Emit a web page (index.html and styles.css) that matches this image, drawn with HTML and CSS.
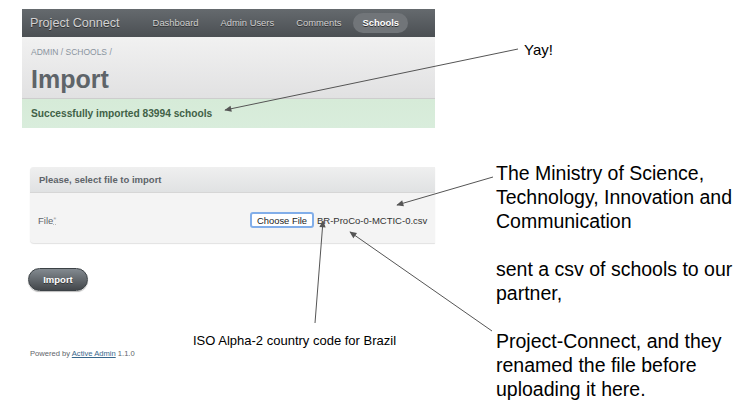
FILE: index.html
```html
<!DOCTYPE html>
<html>
<head>
<meta charset="utf-8">
<link rel="stylesheet" href="styles.css">
</head>
<body>
<div class="canvas">
  <div class="app">
    <div class="header">
      <span class="brand">Project Connect</span>
      <nav class="nav">
        <span class="nav-item">Dashboard</span>
        <span class="nav-item">Admin Users</span>
        <span class="nav-item">Comments</span>
        <span class="nav-item current">Schools</span>
      </nav>
    </div>
    <div class="title-bar">
      <div class="breadcrumb">ADMIN / SCHOOLS /</div>
      <h1 class="page-title">Import</h1>
    </div>
    <div class="flash">Successfully imported 83994 schools</div>
    <div class="panel">
      <div class="panel-head">Please, select file to import</div>
      <div class="panel-body">
        <label class="field-label">File<span class="req">*</span></label>
        <span class="file-btn">Choose File</span>
        <span class="file-name">BR-ProCo-0-MCTIC-0.csv</span>
      </div>
    </div>
    <div class="actions"><span class="btn">Import</span></div>
    <div class="footer">Powered by <a class="footer-link">Active Admin</a> 1.1.0</div>
  </div>
  <div class="notes">
    <div class="yay">Yay!</div>
    <div class="story">The Ministry of Science,<br>Technology, Innovation and<br>Communication<br><br>sent a csv of schools to our<br>partner,<br><br>Project-Connect, and they<br>renamed the file before<br>uploading it here.</div>
  </div>
  <div class="iso-note">ISO Alpha-2 country code for Brazil</div>
  <svg class="arrows" width="755" height="419" viewBox="0 0 755 419">
    <defs>
      <marker id="ah" viewBox="0 0 10 10" refX="9" refY="5" markerWidth="8" markerHeight="7" markerUnits="userSpaceOnUse" orient="auto">
        <path d="M0,0.5 L10,5 L0,9.5 z" fill="#555"/>
      </marker>
    </defs>
    <line x1="518" y1="49" x2="225" y2="110" stroke="#555" stroke-width="1" marker-end="url(#ah)"/>
    <line x1="493" y1="177" x2="397" y2="205" stroke="#555" stroke-width="1" marker-end="url(#ah)"/>
    <line x1="315" y1="323" x2="323" y2="221" stroke="#555" stroke-width="1" marker-end="url(#ah)"/>
    <line x1="492" y1="331" x2="350" y2="232" stroke="#555" stroke-width="1" marker-end="url(#ah)"/>
  </svg>
</div>
</body>
</html>
```
FILE: styles.css
```css
html, body {
  margin: 0;
  padding: 0;
  background: #fff;
}
body {
  font-family: "Liberation Sans", Arial, sans-serif;
  overflow: hidden;
}
.canvas {
  position: relative;
  width: 755px;
  height: 419px;
  display: flex;
  align-items: flex-start;
}
.app {
  margin-left: 22px;
  margin-top: 9px;
  width: 413px;
  display: flex;
  flex-direction: column;
}
.header {
  height: 28px;
  background: linear-gradient(#656a6e, #4b4f53);
  display: flex;
  align-items: center;
  padding-left: 8px;
}
.brand {
  font-size: 12.6px;
  color: #d2d2d2;
  text-shadow: 0 1px 0 #333;
  margin-right: 23px;
}
.nav {
  display: flex;
  align-items: center;
  gap: 2px;
}
.nav-item {
  font-size: 9.4px;
  color: #d0d0d0;
  text-shadow: 0 1px 0 #2e2e2e;
  padding: 0 10px;
  height: 20px;
  line-height: 20px;
  border-radius: 10px;
}
.nav-item.current {
  background: #717579;
  color: #fff;
  font-weight: bold;
  padding: 0 9px;
}
.title-bar {
  background: linear-gradient(#f1f1f1, #e1e1e2);
  border-bottom: 1px solid #cdcdcd;
  padding: 10px 0 5px 9px;
}
.breadcrumb {
  font-size: 8.5px;
  line-height: 10px;
  color: #8a949e;
}
.page-title {
  margin: 8px 0 0 0;
  font-size: 25px;
  line-height: 28px;
  font-weight: bold;
  color: #5e6469;
}
.flash {
  height: 29px;
  background: linear-gradient(#d6ebd8, #d9eddc);
  color: #416147;
  font-size: 10.2px;
  font-weight: bold;
  display: flex;
  align-items: center;
  padding-left: 9px;
}
.panel {
  margin: 39px 0 0 8px;
  background: #f4f4f4;
  border-radius: 4px 0 0 4px;
  box-shadow: 0 1px 1px #e2e2e2;
}
.panel-head {
  height: 25px;
  background: linear-gradient(#efefef, #e0e2e3);
  border-bottom: 1px solid #d6d6d6;
  border-radius: 4px 0 0 0;
  display: flex;
  align-items: center;
  padding-left: 9px;
  font-size: 9.5px;
  font-weight: bold;
  color: #5e6469;
}
.panel-body {
  height: 50px;
  display: flex;
  align-items: center;
  padding-left: 8px;
  padding-top: 4px;
  box-sizing: border-box;
}
.field-label {
  width: 212px;
  font-size: 9.5px;
  color: #5e6469;
}
.req {
  font-size: 8px;
  color: #aaa;
  vertical-align: 2px;
  border-bottom: 1px dotted #bbb;
}
.file-btn {
  width: 64px;
  height: 16px;
  box-sizing: border-box;
  border: 2px solid #82aee9;
  border-radius: 3px;
  background: #fff;
  font-size: 9.4px;
  color: #222;
  display: flex;
  align-items: center;
  justify-content: center;
}
.file-name {
  margin-left: 3px;
  font-size: 9.5px;
  color: #333;
  white-space: nowrap;
}
.actions {
  margin: 25px 0 0 6px;
  display: flex;
}
.btn {
  width: 60px;
  height: 23px;
  border-radius: 12px;
  background: linear-gradient(#838a90, #43474b);
  border: 1px solid #3c4246;
  box-sizing: border-box;
  box-shadow: 0 1px 1px #bbb;
  color: #fff;
  font-size: 9.5px;
  font-weight: bold;
  text-shadow: 0 1px 0 #333;
  display: flex;
  align-items: center;
  justify-content: center;
}
.footer {
  margin: 58px 0 0 8px;
  font-size: 7.6px;
  line-height: 10px;
  color: #5e6469;
}
.footer-link {
  color: #38678b;
  text-decoration: underline;
}
.notes {
  margin-left: 61px;
  padding-top: 41px;
  display: flex;
  flex-direction: column;
  color: #000;
}
.yay {
  margin-left: 28px;
  font-size: 15px;
  line-height: 17px;
}
.story {
  margin-top: 103px;
  font-size: 19.5px;
  line-height: 24px;
  white-space: nowrap;
}
.iso-note {
  position: absolute;
  left: 193px;
  top: 333px;
  font-size: 13px;
  line-height: 15px;
  color: #000;
  white-space: nowrap;
}
.arrows {
  position: absolute;
  left: 0;
  top: 0;
  pointer-events: none;
}
```
